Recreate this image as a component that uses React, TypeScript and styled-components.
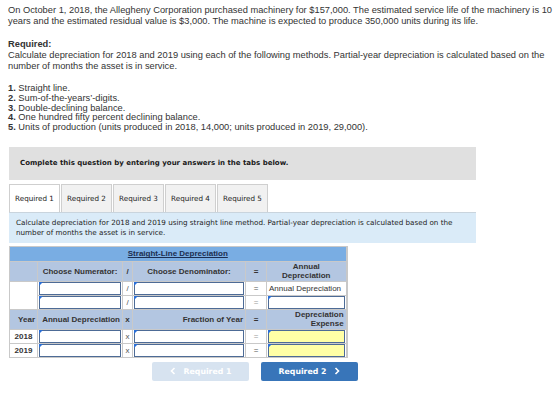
import React from "react";
import styled, { createGlobalStyle } from "styled-components";

const GlobalStyle = createGlobalStyle`
    body {
        margin: 0;
        background: #ffffff;
        font-family: "Liberation Sans", Arial, sans-serif;
    }
`;

const methods = [
    "Straight line.",
    "Sum-of-the-years\u2019-digits.",
    "Double-declining balance.",
    "One hundred fifty percent declining balance.",
    "Units of production (units produced in 2018, 14,000; units produced in 2019, 29,000).",
];

const tabs = ["Required 1", "Required 2", "Required 3", "Required 4", "Required 5"];

const Chevron: React.FC<{ dir: "left" | "right" }> = ({ dir }) => (
    <svg width="6" height="8" viewBox="0 0 6 8">
        <path
            d={dir === "left" ? "M4.5 1 L1.5 4 L4.5 7" : "M1.5 1 L4.5 4 L1.5 7"}
            fill="none"
            stroke="currentColor"
            strokeWidth="1.6"
        />
    </svg>
);

export default function App() {
    return (
        <Page>
            <GlobalStyle />
            <Intro>
                On October 1, 2018, the Allegheny Corporation purchased machinery for $157,000. The estimated service
                life of the machinery is 10 years and the estimated residual value is $3,000. The machine is expected to
                produce 350,000 units during its life.
            </Intro>
            <Heading>Required:</Heading>
            <Intro>
                Calculate depreciation for 2018 and 2019 using each of the following methods. Partial-year depreciation is
                calculated based on the number of months the asset is in service.
            </Intro>
            <List>
                {methods.map((m, i) => (
                    <li key={m}>
                        <b>{i + 1}.</b> {m}
                    </li>
                ))}
            </List>

            <Banner>Complete this question by entering your answers in the tabs below.</Banner>

            <TabRow>
                {tabs.map((t, i) => (
                    <Tab key={t} $active={i === 0}>
                        {t}
                    </Tab>
                ))}
            </TabRow>
            <Instructions>
                Calculate depreciation for 2018 and 2019 using straight line method. Partial-year depreciation is
                calculated based on the number of months the asset is in service.
            </Instructions>

            <Table>
                <colgroup>
                    <col style={{ width: 28 }} />
                    <col style={{ width: 85 }} />
                    <col style={{ width: 10 }} />
                    <col style={{ width: 113 }} />
                    <col style={{ width: 21 }} />
                    <col style={{ width: 80 }} />
                </colgroup>
                <tbody>
                    <tr>
                        <TitleCell colSpan={6}>Straight-Line Depreciation</TitleCell>
                    </tr>
                    <HeadRow $h={20}>
                        <HeadCell />
                        <HeadCell $align="center">Choose Numerator:</HeadCell>
                        <HeadCell $align="center">/</HeadCell>
                        <HeadCell $align="center">Choose Denominator:</HeadCell>
                        <HeadCell $align="center">=</HeadCell>
                        <HeadCell $align="center">
                            Annual
                            <br />
                            Depreciation
                        </HeadCell>
                    </HeadRow>
                    <BodyRow $h={14}>
                        <BlankCell rowSpan={2} />
                        <InputCell>
                            <InputBox />
                        </InputCell>
                        <SignCell>/</SignCell>
                        <InputCell>
                            <InputBox />
                        </InputCell>
                        <SignCell>=</SignCell>
                        <TextCell>Annual Depreciation</TextCell>
                    </BodyRow>
                    <BodyRow $h={13}>
                        <InputCell>
                            <InputBox />
                        </InputCell>
                        <SignCell>/</SignCell>
                        <InputCell>
                            <InputBox />
                        </InputCell>
                        <SignCell $faint>=</SignCell>
                        <InputCell>
                            <InputBox />
                        </InputCell>
                    </BodyRow>
                    <HeadRow $h={20}>
                        <HeadCell $align="right">Year</HeadCell>
                        <HeadCell $align="right">Annual Depreciation</HeadCell>
                        <HeadCell $align="center">x</HeadCell>
                        <HeadCell $align="right">Fraction of Year</HeadCell>
                        <HeadCell $align="center">=</HeadCell>
                        <HeadCell $align="right">
                            Depreciation
                            <br />
                            Expense
                        </HeadCell>
                    </HeadRow>
                    {["2018", "2019"].map((y, i) => (
                        <BodyRow key={y} $h={i === 0 ? 14 : 13}>
                            <YearCell>{y}</YearCell>
                            <InputCell>
                                <InputBox />
                            </InputCell>
                            <SignCell>x</SignCell>
                            <InputCell>
                                <InputBox />
                            </InputCell>
                            <SignCell $faint={i === 0}>=</SignCell>
                            <InputCell>
                                <InputBox $yellow />
                            </InputCell>
                        </BodyRow>
                    ))}
                </tbody>
            </Table>

            <NavRow>
                <NavButton $primary={false}>
                    <Chevron dir="left" />
                    Required 1
                </NavButton>
                <NavButton $primary>
                    Required 2
                    <Chevron dir="right" />
                </NavButton>
            </NavRow>
        </Page>
    );
}

const Page = styled.div`
    width: 560px;
    height: 400px;
    padding: 5px 0 0 8px;
    box-sizing: border-box;
    color: #333333;
    overflow: hidden;
`;

const Intro = styled.p`
    margin: 0;
    font-size: 9.3px;
    line-height: 11px;
    color: #333333;
    width: 549px;
`;

const Heading = styled.div`
    margin-top: 12px;
    font-size: 9.3px;
    line-height: 11px;
    font-weight: 700;
`;

const List = styled.ol`
    list-style: none;
    margin: 12px 0 0;
    padding: 0;
    font-size: 9.3px;
    line-height: 9.8px;
    color: #333333;

    b {
        font-weight: 700;
    }
`;

const Banner = styled.div`
    margin: 14px 0 0 1px;
    width: 467px;
    height: 33px;
    box-sizing: border-box;
    padding-left: 11px;
    display: flex;
    align-items: center;
    background: #e0e0e0;
    font-family: "DejaVu Sans", Verdana, sans-serif;
    font-size: 7px;
    font-weight: 700;
    color: #1a1a1a;
`;

const TabRow = styled.div`
    display: flex;
    gap: 1px;
    margin: 4px 0 0 1px;
    height: 28px;
`;

const Tab = styled.div<{ $active: boolean }>`
    width: 51px;
    height: 28px;
    box-sizing: border-box;
    display: flex;
    align-items: center;
    justify-content: center;
    border: 1px solid #cfcfcf;
    border-bottom: none;
    background: ${p => (p.$active ? "#ffffff" : "#f1f1f1")};
    font-family: "DejaVu Sans", Verdana, sans-serif;
    font-size: 7.2px;
    color: #222222;
`;

const Instructions = styled.div`
    margin-left: 1px;
    width: 467px;
    height: 31px;
    box-sizing: border-box;
    padding: 5px 7px 0;
    background: #daebf8;
    border-top: 1px solid #c9d4dd;
    font-family: "DejaVu Sans", Verdana, sans-serif;
    font-size: 7.2px;
    line-height: 10px;
    color: #222222;
`;

const Table = styled.table`
    margin: 3px 0 0 1px;
    width: 338px;
    table-layout: fixed;
    border-collapse: collapse;
    font-family: "Liberation Sans", Arial, sans-serif;
    font-size: 8px;
    color: #333333;
    border-right: 2px solid #c8c8c8;
    border-bottom: 1px solid #c8c8c8;

    td {
        padding: 0;
        border: 1px solid #c9c9c9;
    }
`;

const TitleCell = styled.td`
    height: 14px;
    background: #79ade3;
    text-align: center;
    font-weight: 700;
    text-decoration: underline;
    color: #1c2d50;
`;

const HeadRow = styled.tr<{ $h: number }>`
    height: ${p => p.$h}px;
    background: #b3c6e1;
`;

const HeadCell = styled.td<{ $align?: "left" | "center" | "right" }>`
    text-align: ${p => p.$align ?? "left"};
    font-weight: 700;
    color: #333333;
    line-height: 9px;
    padding: 0 2px !important;
    white-space: nowrap;
`;

const BodyRow = styled.tr<{ $h: number }>`
    height: ${p => p.$h}px;
    background: #ffffff;
`;

const BlankCell = styled.td`
    background: #ffffff;
`;

const InputCell = styled.td`
    padding: 0 !important;
    vertical-align: middle;
`;

const InputBox = styled.div<{ $yellow?: boolean }>`
    position: relative;
    height: 11px;
    margin: 0 1px;
    border: 1px solid #4d6b96;
    background: ${p => (p.$yellow ? "#ffffa6" : "#ffffff")};

    &::before {
        content: "";
        position: absolute;
        top: -1px;
        left: -1px;
        border-top: 4px solid #2b6fd6;
        border-right: 4px solid transparent;
    }
`;

const SignCell = styled.td<{ $faint?: boolean }>`
    text-align: center;
    color: ${p => (p.$faint ? "#999999" : "#555555")};
`;

const TextCell = styled.td`
    padding-left: 2px !important;
    white-space: nowrap;
    color: #333333;
`;

const YearCell = styled.td`
    text-align: center;
    font-weight: 700;
    background: #ffffff;
`;

const NavRow = styled.div`
    display: flex;
    gap: 12px;
    margin-top: 4px;
    padding-left: 144px;
`;

const NavButton = styled.div<{ $primary: boolean }>`
    width: 97px;
    height: 19px;
    display: flex;
    align-items: center;
    justify-content: center;
    gap: 8px;
    border-radius: 2px;
    background: ${p => (p.$primary ? "#3875b9" : "#d7e3f0")};
    color: #ffffff;
    font-family: "DejaVu Sans", Verdana, sans-serif;
    font-size: 7.8px;
    font-weight: 700;
`;
